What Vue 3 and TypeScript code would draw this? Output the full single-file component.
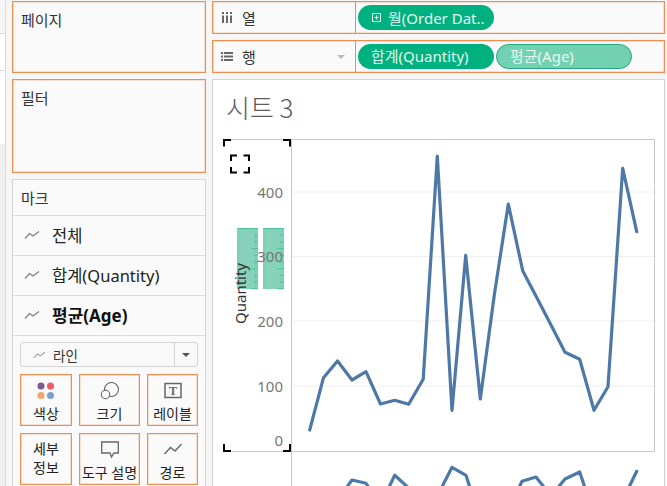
<script setup lang="ts">
import { computed } from 'vue'

const topSeries: [number, number][] = [
  [309.7, 430], [323.5, 377.7], [337.5, 361], [352, 380], [366, 371.7], [380.5, 404],
  [394.7, 400.3], [408.7, 404.3], [423.2, 379.3], [437.3, 156], [452, 410.3], [465.7, 255.3],
  [480.3, 399], [494.3, 295], [508.3, 204], [522.7, 270.7], [537, 298], [551, 325],
  [565, 352.3], [579.7, 359.3], [594, 410.3], [608, 386.7], [622.7, 168.3], [636.7, 231.7]
]
const bottomSeries: [number, number][] = [
  [309.7, 530], [323.5, 510], [337.5, 500], [352, 480], [366, 483.3], [380.5, 505],
  [394.7, 475.3], [408.7, 488], [423.2, 500], [437.3, 496], [452, 467.3], [466, 475.3],
  [480.3, 520], [494.3, 530], [508.3, 510], [522, 481.3], [536, 477], [551, 496],
  [565, 479], [579.7, 472], [594, 515], [608, 525], [622.7, 500], [636.7, 471.3]
]
const toPoints = (s: [number, number][]) => s.map(p => p.join(',')).join(' ')
const topLine = computed(() => toPoints(topSeries))
const bottomLine = computed(() => toPoints(bottomSeries))

const grid = [192, 256.5, 321, 386]
const ticks = [
  { label: '400', y: 198 },
  { label: '300', y: 262 },
  { label: '200', y: 327 },
  { label: '100', y: 392 },
  { label: '0', y: 446 }
]
const rulerTicks = Array.from({ length: 10 }, (_, i) => 228.5 + i * 6.7)
const rulers = [237, 263]
const marks = [
  { label: '전체', latin: '', bold: false },
  { label: '합계', latin: '(Quantity)', bold: false },
  { label: '평균', latin: '(Age)', bold: true }
]
</script>

<template>
  <div class="root">
    <div class="strip">
      <div class="strip-a"></div>
      <div class="strip-b"></div>
      <div class="strip-c"></div>
      <div class="strip-d"></div>
    </div>

    <aside class="side">
      <section class="box pages"><h2>페이지</h2></section>
      <section class="box filters"><h2>필터</h2></section>
      <section class="marks">
        <div class="marks-head">마크</div>
        <div v-for="m in marks" :key="m.label" class="mark-row" :class="{ bold: m.bold }">
          <svg class="spark" width="16" height="10" viewBox="0 0 16 10"><path d="M1 8.5 L5.5 3.5 L9 6 L15 1.5" /></svg>
          <span>{{ m.label }}{{ m.latin }}</span>
        </div>
        <div class="marks-body">
          <div class="select">
            <div class="select-main">
              <svg class="spark small" width="13" height="8" viewBox="0 0 16 10"><path d="M1 8.5 L5.5 3.5 L9 6 L15 1.5" /></svg>
              <span>라인</span>
            </div>
            <div class="select-arrow"></div>
          </div>
          <div class="btn-grid">
            <button class="btn">
              <svg width="18" height="18" viewBox="0 0 18 18">
                <circle cx="4" cy="4" r="3.5" fill="#7a5a8c" />
                <circle cx="13.5" cy="4" r="3.5" fill="#ee5a6a" />
                <circle cx="4" cy="13.5" r="3.5" fill="#f2a36e" />
                <circle cx="13.5" cy="13.5" r="3.5" fill="#7c9fcb" />
              </svg>
              <span>색상</span>
            </button>
            <button class="btn">
              <svg width="20" height="18" viewBox="0 0 20 18" fill="none" stroke="#666" stroke-width="1.1">
                <circle cx="11.5" cy="7.5" r="7" />
                <circle cx="5.5" cy="12.5" r="4.2" fill="#fafafa" />
              </svg>
              <span>크기</span>
            </button>
            <button class="btn">
              <svg width="18" height="18" viewBox="0 0 18 18">
                <rect x="1" y="1.5" width="16" height="14" fill="none" stroke="#666" stroke-width="1.5" />
                <text x="9" y="13" text-anchor="middle" class="t-glyph">T</text>
              </svg>
              <span>레이블</span>
            </button>
            <button class="btn two-line"><span>세부<br />정보</span></button>
            <button class="btn">
              <svg width="18" height="18" viewBox="0 0 18 18" fill="none" stroke="#666" stroke-width="1.3">
                <path d="M.7 1 H17.3 V12 H13 L10.5 16 L9 12 H.7 Z" />
              </svg>
              <span>도구 설명</span>
            </button>
            <button class="btn">
              <svg width="18" height="18" viewBox="0 0 18 18" fill="none" stroke="#666" stroke-width="1.3">
                <path d="M.5 13 L6.5 6.5 L11 10 L17.5 3" />
              </svg>
              <span>경로</span>
            </button>
          </div>
        </div>
      </section>
    </aside>

    <main class="main">
      <div class="shelf">
        <div class="shelf-label">
          <svg width="12" height="11" viewBox="0 0 12 11" class="shelf-icon">
            <path d="M1 0h2v2H1zM5 0h2v2H5zM9 0h2v2H9zM1 3.5h2V11H1zM5 3.5h2V11H5zM9 3.5h2V11H9z" fill="#666" />
          </svg>
          <span>열</span>
        </div>
        <div class="shelf-pills">
          <div class="pill solid">
            <svg width="9" height="9" viewBox="0 0 9 9" class="plus"><path d="M.5.5h8v8h-8zM2.5 4.5h4M4.5 2.5v4" fill="none" stroke="#e4f7ef" /></svg>
            <span>월(Order Dat..</span>
          </div>
        </div>
      </div>
      <div class="shelf">
        <div class="shelf-label">
          <svg width="12" height="9" viewBox="0 0 12 9" class="shelf-icon">
            <path d="M0 0h2v2H0zM3 0h9v2H3zM0 3.5h2v2H0zM3 3.5h9v2H3zM0 7h2v2H0zM3 7h9v2H3z" fill="#666" />
          </svg>
          <span>행</span>
          <i class="shelf-arrow"></i>
        </div>
        <div class="shelf-pills">
          <div class="pill solid pad"><span>합계(Quantity)</span></div>
          <div class="pill light pad"><span>평균(Age)</span></div>
        </div>
      </div>

      <section class="sheet">
        <h1 class="title">시트 3</h1>
        <svg class="chart" width="452" height="356" viewBox="212 130 452 356">
          <line v-for="y in grid" :key="y" x1="292" x2="654" :y1="y" :y2="y" class="gridline" />
          <g v-for="x in rulers" :key="x">
            <rect :x="x" y="228" width="21" height="61" fill="#7dd1b5" />
            <rect :x="x + 3" y="231" width="14" height="58" fill="#86d2ba" />
            <line :x1="x" :x2="x + 21" y1="228.5" y2="228.5" stroke="#4fc49c" />
            <line v-for="(t, i) in rulerTicks" :key="t" :x1="x + (i % 3 === 0 ? 14 : 17)" :x2="x + 21" :y1="t" :y2="t" stroke="#4fc49c" />
          </g>
          <text v-for="t in ticks" :key="t.label" x="283" :y="t.y" text-anchor="end" class="tick">{{ t.label }}</text>
          <text transform="translate(245.5 324) rotate(-90)" class="axis-title">Quantity</text>
          <path d="M223 139.5 H654.5 V451.5 H232 M291.5 139.5 V486" class="frame" />
          <polyline :points="topLine" class="series" />
          <polyline :points="bottomLine" class="series" />
          <path d="M224 146.5 V140 H231 M283 140 H290 V146.5 M224 444 V451 H231 M283 451 H290 V444" class="corner" />
          <path d="M231 161 V155.5 H237 M243.5 155.5 H249 V161 M231 167 V172.5 H237 M243.5 172.5 H249 V167" class="corner" />
        </svg>
      </section>
    </main>
  </div>
</template>

<style>
html, body { margin: 0; background: #f5f5f5; overflow: hidden; }
</style>

<style scoped>
.root {
  display: flex;
  width: 667px;
  height: 486px;
  overflow: hidden;
  background: #f6f6f6;
  font-family: "Noto Sans", "Noto Sans CJK KR", sans-serif;
  color: #333;
}
.strip { width: 5px; border-right: 1px solid #dcdcdc; display: flex; flex-direction: column; flex: none; }
.strip-a { height: 33px; background: #f6f6f6; border-bottom: 1px solid #dcdcdc; }
.strip-b { height: 36px; background: #fff; border-bottom: 1px solid #dcdcdc; }
.strip-c { height: 73px; background: #fff; }
.strip-d { flex: 1; background: #f0f0f0; }

.side { width: 194px; margin-left: 6px; padding-top: 1px; display: flex; flex-direction: column; gap: 6px; flex: none; height: 486px; box-sizing: border-box; }
.box { box-sizing: border-box; background: #fafafa; border: 1px solid #ef8e50; box-shadow: inset 0 0 0 1px rgba(239, 142, 80, .25); padding: 7px 8px; flex: none; }
.box h2 { margin: 0; font-size: 15px; font-weight: 400; line-height: 22px; color: #333; }
.pages { height: 72px; }
.filters { height: 94px; }

.marks { background: #fafafa; border: 1px solid #d6d6d6; border-bottom: 0; box-sizing: border-box; flex: 1; min-height: 0; }
.marks-head { height: 36px; box-sizing: border-box; padding: 7px 8px 0; font-size: 15px; line-height: 22px; border-bottom: 1px solid #dedede; }
.mark-row { height: 40px; box-sizing: border-box; display: flex; align-items: center; border-bottom: 1px solid #dedede; font-size: 16.5px; color: #222; padding: 0 0 2px 11px; gap: 12px; }
.mark-row.bold { font-weight: 700; color: #111; font-size: 17px; }
.spark { flex: none; }
.spark path { fill: none; stroke: #808080; stroke-width: 1.2; }

.marks-body { padding: 6px 7px; }
.select { height: 25px; box-sizing: border-box; border: 1px solid #d4d4d4; border-radius: 3px; display: flex; background: #f9f9f9; }
.select-main { flex: 1; display: flex; align-items: center; gap: 7px; padding-left: 12px; font-size: 13.5px; color: #333; }
.select-arrow { width: 22px; border-left: 1px solid #d4d4d4; display: flex; align-items: center; justify-content: center; }
.select-arrow::after { content: ""; border: 4px solid transparent; border-top: 4px solid #555; border-bottom: 0; }

.btn-grid { display: grid; grid-template-columns: 52px 61px 51px; column-gap: 7px; row-gap: 7px; margin-top: 7px; }
.btn {
  height: 52px; box-sizing: border-box; margin: 0; padding: 7px 0 0; background: #fafafa;
  border: 1px solid #ef8e50; box-shadow: inset 0 0 0 1px rgba(239, 142, 80, .25); font: inherit; font-size: 14px; line-height: 18px; color: #222;
  display: flex; flex-direction: column; align-items: center; justify-content: flex-start; gap: 5px;
  white-space: nowrap;
}
.btn.two-line { padding-top: 5px; line-height: 19px; }
.t-glyph { font-family: "Liberation Serif", serif; font-weight: 700; font-size: 12px; fill: #666; }

.main { width: 453px; margin-left: 6px; padding-top: 1px; display: flex; flex-direction: column; gap: 6px; flex: none; height: 486px; box-sizing: border-box; }
.shelf { box-sizing: border-box; height: 33px; border: 1px solid #ef8e50; box-shadow: inset 0 0 0 1px rgba(239, 142, 80, .25); display: flex; background: #fafafa; flex: none; }
.shelf-label { box-sizing: border-box; width: 143px; border-right: 1px solid #ef8e50; display: flex; align-items: center; padding-left: 8px; gap: 9px; font-size: 15px; position: relative; }
.shelf-icon { flex: none; }
.shelf-arrow { position: absolute; right: 10px; top: 14px; border: 4px solid transparent; border-top: 4px solid #bbb; border-bottom: 0; }
.shelf-pills { display: flex; gap: 2px; padding: 3px 0 0 2px; }
.pill { box-sizing: border-box; width: 136px; height: 25px; border-radius: 13px; display: flex; align-items: center; font-size: 15px; white-space: nowrap; }
.pill.solid { background: #00b180; color: #e4f7ef; padding-left: 14px; gap: 7px; }
.pill.pad { padding-left: 13px; padding-bottom: 2px; }
.pill.light { background: #72d1b1; border: 1px solid #25a57d; color: #e8f8f1; }
.plus { flex: none; }

.sheet { flex: 1; min-height: 0; background: #fff; border: 1px solid #d4d4d4; border-bottom: 0; box-sizing: border-box; overflow: hidden; }
.title { margin: 0; height: 50px; box-sizing: border-box; padding: 9px 0 0 13px; font-size: 26px; font-weight: 300; line-height: 36px; color: #5c5c5c; font-family: "Noto Sans CJK KR", sans-serif; }
.chart { display: block; margin-left: -1px; }
.gridline { stroke: #f0f0f0; stroke-width: 1; }
.tick { font-size: 15px; fill: #777; }
.axis-title { font-size: 15px; fill: #333; }
.frame { fill: none; stroke: #c8c8c8; stroke-width: 1; }
.series { fill: none; stroke: #4e79a7; stroke-width: 3.2; stroke-linejoin: round; stroke-linecap: round; }
.corner { fill: none; stroke: #000; stroke-width: 2; }
</style>
